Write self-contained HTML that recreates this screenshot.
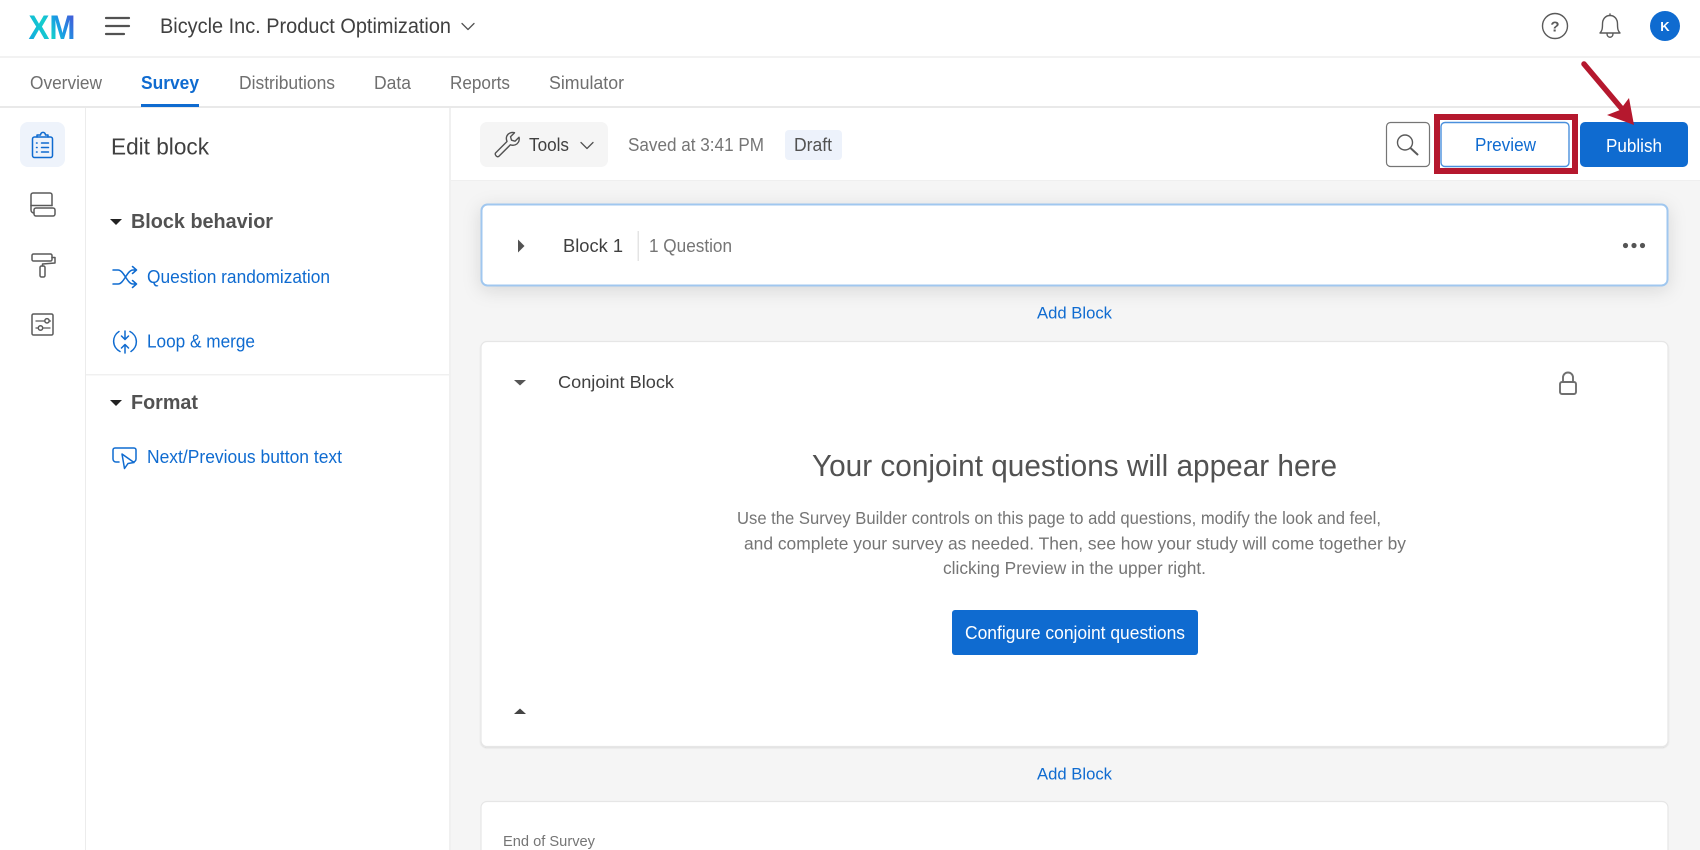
<!DOCTYPE html>
<html lang="en">
<head>
<meta charset="utf-8">
<title>Bicycle Inc. Product Optimization</title>
<style>
html,body{margin:0;padding:0;width:1700px;height:850px;overflow:hidden;background:#fff}
svg{display:block;font-family:"Liberation Sans",sans-serif;filter:blur(.35px)}
.ic{fill:none;stroke-linecap:round;stroke-linejoin:round}
</style>
</head>
<body>
<svg width="1700" height="850" viewBox="0 0 1700 850" xmlns="http://www.w3.org/2000/svg">
<defs>
<linearGradient id="xm" gradientUnits="userSpaceOnUse" x1="29" y1="39" x2="76" y2="14">
<stop offset="0" stop-color="#12a8e0"/><stop offset=".4" stop-color="#14d0cc"/><stop offset=".62" stop-color="#1a9be4"/><stop offset="1" stop-color="#4b4ed6"/>
</linearGradient>
<filter id="sh" x="-5%" y="-40%" width="110%" height="190%"><feDropShadow dx="0" dy="4" stdDeviation="9" flood-color="#000" flood-opacity=".12"/></filter>
<filter id="sh2" x="-5%" y="-5%" width="110%" height="110%"><feDropShadow dx="0" dy="1" stdDeviation=".8" flood-color="#000" flood-opacity=".12"/></filter>
</defs>

<!-- backgrounds -->
<rect width="1700" height="850" fill="#fff"/>
<rect x="451" y="181" width="1249" height="669" fill="#f5f5f5"/>
<rect x="0" y="56" width="1700" height="2" fill="#f2f2f2"/>
<rect x="0" y="106" width="1700" height="2" fill="#e9e9e9"/>
<rect x="85" y="108" width="1" height="742" fill="#ececec"/>
<rect x="449" y="108" width="2" height="742" fill="#f0f0f0"/>
<rect x="451" y="180" width="1249" height="1" fill="#efefef"/>

<!-- top bar -->
<text x="28.500" y="39" font-size="34" font-weight="700" fill="url(#xm)" textLength="47" lengthAdjust="spacingAndGlyphs">XM</text>
<g stroke="#525252" stroke-width="2.200" stroke-linecap="round"><path d="M106 18H129M106 26H129M106 34H124"/></g>
<text x="160" y="33" font-size="21" fill="#404040" textLength="291" lengthAdjust="spacingAndGlyphs">Bicycle Inc. Product Optimization</text>
<path class="ic" d="M462 23.500l6 6 6-6" stroke="#525252" stroke-width="1.300"/>
<circle class="ic" cx="1555" cy="26" r="12.500" stroke="#5a5a5a" stroke-width="1.400"/>
<text x="1555" y="31.500" font-size="15" font-weight="700" fill="#5a5a5a" text-anchor="middle">?</text>
<path class="ic" d="M1600 33c2-2 2.500-4 2.500-9 0-5 3-8.500 7.500-8.500s7.500 3.500 7.500 8.500c0 5 .5 7 2.500 9zM1610 15.500v-1.500M1607 33.500c0 5 6 5 6 0" stroke="#5a5a5a" stroke-width="1.400"/>
<circle cx="1665" cy="26" r="15" fill="#0f6bd0"/>
<text x="1665" y="31" font-size="13" font-weight="700" fill="#fff" text-anchor="middle">K</text>

<!-- tabs -->
<g font-size="18" fill="#6f6f6f">
<text x="30" y="89" textLength="72" lengthAdjust="spacingAndGlyphs">Overview</text>
<text x="239" y="89" textLength="96" lengthAdjust="spacingAndGlyphs">Distributions</text>
<text x="374" y="89" textLength="37" lengthAdjust="spacingAndGlyphs">Data</text>
<text x="450" y="89" textLength="60" lengthAdjust="spacingAndGlyphs">Reports</text>
<text x="549" y="89" textLength="75" lengthAdjust="spacingAndGlyphs">Simulator</text>
</g>
<text x="141" y="89" font-size="18" font-weight="700" fill="#0f6bd0" textLength="58" lengthAdjust="spacingAndGlyphs">Survey</text>
<rect x="141" y="104" width="58" height="3" fill="#0f6bd0"/>

<!-- left rail -->
<rect x="20" y="122" width="45" height="45" rx="8" fill="#eef3fb"/>
<g class="ic" stroke="#0f6bd0" stroke-width="1.500">
<rect x="32.500" y="137" width="20" height="20.500" rx="2"/>
<path d="M37 137v-2h3.500c.5-3.500 4.500-3.500 5 0H48v2"/>
<path d="M41.500 143h7M41.500 147.500h7M41.500 152h7"/>
<path d="M36.500 143h.6M36.500 147.500h.6M36.500 152h.6"/>
</g>
<g class="ic" stroke="#5a5a5a" stroke-width="1.500">
<path d="M52 205.500v-10.500a2 2 0 0 0-2-2H33a2 2 0 0 0-2 2v15a3 3 0 0 0 3 3"/>
<rect x="34" y="208" width="21" height="8" rx="2"/>
<path d="M31 205.500h21"/>
</g>
<g class="ic" stroke="#5a5a5a" stroke-width="1.500">
<rect x="32" y="254" width="20" height="7" rx="1.500"/>
<path d="M52 257.500h3v5.500L42.500 264v2"/>
<rect x="40" y="266" width="5" height="11" rx="1.500"/>
</g>
<g class="ic" stroke="#5a5a5a" stroke-width="1.500">
<rect x="32" y="314" width="21" height="21" rx="1.500"/>
<path d="M36 321h8M50 321h.5M36 328h1.500M43.500 328h6.500" stroke-width="1.300"/>
<circle cx="47" cy="320.800" r="2.200"/>
<circle cx="40.500" cy="328" r="2.200"/>
</g>

<!-- side panel -->
<text x="111" y="154.500" font-size="23" fill="#404040" textLength="98" lengthAdjust="spacingAndGlyphs">Edit block</text>
<path d="M110 219h12l-6 6z" fill="#222"/>
<text x="131" y="228" font-size="20.500" font-weight="700" fill="#525252" textLength="142" lengthAdjust="spacingAndGlyphs">Block behavior</text>

<g class="ic" stroke="#0f6bd0" stroke-width="1.500">
<path d="M113 270h5c6 0 9 14 15 14h3.500M113 284h5c6 0 9-14 15-14h3.500M132.500 266.500l4 3.500-4 3.500M132.500 280.500l4 3.500-4 3.500"/>
</g>
<text x="147" y="283" font-size="18" fill="#0f6bd0" textLength="183" lengthAdjust="spacingAndGlyphs">Question randomization</text>

<g class="ic" stroke="#0f6bd0" stroke-width="1.500">
<path d="M130 331.500a11.500 11.500 0 0 1 1 20M120 351.500a11.500 11.500 0 0 1-1-20"/>
<path d="M125 331v8.500M121.500 336l3.500 3.500 3.500-3.500M125 353v-8.500M121.500 348l3.500-3.500 3.500 3.500"/>
</g>
<text x="147" y="347.500" font-size="18" fill="#0f6bd0" textLength="108" lengthAdjust="spacingAndGlyphs">Loop &amp; merge</text>

<rect x="86" y="374" width="363" height="1.500" fill="#f0f0f0"/>
<path d="M110 400h12l-6 6z" fill="#222"/>
<text x="131" y="409" font-size="20.500" font-weight="700" fill="#525252" textLength="67" lengthAdjust="spacingAndGlyphs">Format</text>

<g class="ic" stroke="#0f6bd0" stroke-width="1.500">
<path d="M119 462h-3a3 3 0 0 1-3-3v-9a2 2 0 0 1 2-2h19a2 2 0 0 1 2 2v9a3 3 0 0 1-3 3h-1"/>
<path d="M122 454l2.500 14.500 3.500-5 6-1z" fill="#fff"/>
</g>
<text x="147" y="463" font-size="18" fill="#0f6bd0" textLength="195" lengthAdjust="spacingAndGlyphs">Next/Previous button text</text>

<!-- toolbar -->
<rect x="480" y="122" width="128" height="45" rx="7" fill="#f5f5f5"/>
<path class="ic" stroke="#525252" stroke-width="1.400" d="M495.500 153l11.500-11.500c-1.800-4.500.5-7.500 3-8.500 1.500-.6 3-.8 4.500-.3l-4 4 1 3.500 3.500 1 4-4c.5 2 .2 3.500-.6 5-1.500 2.500-4.500 3.800-8 2.600l-11.500 11.500c-1.500 1.500-4.500-1.300-3.400-3.300z"/>
<text x="529" y="151" font-size="18" fill="#404040" textLength="40" lengthAdjust="spacingAndGlyphs">Tools</text>
<path class="ic" d="M581 142.500l6 6 6-6" stroke="#525252" stroke-width="1.300"/>
<text x="628" y="151" font-size="18" fill="#757575" textLength="136" lengthAdjust="spacingAndGlyphs">Saved at 3:41 PM</text>
<rect x="785" y="130" width="57" height="30" rx="4" fill="#edf2fb"/>
<text x="794" y="151" font-size="18" fill="#525252" textLength="38" lengthAdjust="spacingAndGlyphs">Draft</text>

<rect x="1386.500" y="122.500" width="43" height="44" rx="4" fill="#fff" stroke="#757575" stroke-width="1.200"/>
<g class="ic" stroke="#5a5a5a" stroke-width="1.400"><circle cx="1405" cy="142.500" r="7.500"/><path d="M1411 148.500l6.500 6" stroke-width="2"/></g>

<rect x="1437" y="117" width="138" height="54" fill="none" stroke="#b5182e" stroke-width="6"/>
<rect x="1441" y="122.500" width="128" height="44" rx="4" fill="#fff" stroke="#4a90dd" stroke-width="1.400"/>
<text x="1475" y="151" font-size="18" fill="#0f6bd0" textLength="61" lengthAdjust="spacingAndGlyphs">Preview</text>
<rect x="1580" y="122" width="108" height="45" rx="5" fill="#0f6bd0"/>
<text x="1606" y="152" font-size="18" fill="#fff" textLength="56" lengthAdjust="spacingAndGlyphs">Publish</text>

<!-- arrow -->
<path d="M1584 64L1622 109" stroke="#b5182e" stroke-width="5.500" stroke-linecap="round"/>
<path d="M1634 125L1607 115L1620 110L1629 98z" fill="#b5182e"/>

<!-- block 1 -->
<rect x="481.500" y="204.500" width="1186" height="81" rx="6" fill="#fff" stroke="#a0c7ef" stroke-width="2" filter="url(#sh)"/>
<path d="M518 239.500l6.500 6.500-6.500 6.500z" fill="#525252"/>
<text x="563" y="252" font-size="18" fill="#404040" textLength="60" lengthAdjust="spacingAndGlyphs">Block 1</text>
<rect x="637.500" y="231" width="1.500" height="30" fill="#e4e4e4"/>
<text x="649" y="252" font-size="18" fill="#757575" textLength="83" lengthAdjust="spacingAndGlyphs">1 Question</text>
<g fill="#555"><circle cx="1625.500" cy="245.500" r="2.600"/><circle cx="1634" cy="245.500" r="2.600"/><circle cx="1642.500" cy="245.500" r="2.600"/></g>

<text x="1037" y="318.500" font-size="16.500" fill="#0f6bd0" textLength="75" lengthAdjust="spacingAndGlyphs">Add Block</text>

<!-- conjoint block -->
<rect x="481" y="341.500" width="1187" height="405" rx="6" fill="#fff" stroke="#e6e6e6" stroke-width="1.200" filter="url(#sh2)"/>
<path d="M514 380h12l-6 5.500z" fill="#555"/>
<text x="558" y="388" font-size="17.500" fill="#404040" textLength="116" lengthAdjust="spacingAndGlyphs">Conjoint Block</text>
<g class="ic" stroke="#6f6f6f" stroke-width="1.900"><rect x="1560" y="382" width="16" height="12" rx="2"/><path d="M1563 382v-4.500a5 5 0 0 1 10 0v4.500"/></g>

<text x="812" y="476" font-size="31" fill="#525252" textLength="525" lengthAdjust="spacingAndGlyphs">Your conjoint questions will appear here</text>
<g font-size="17.500" fill="#757575">
<text x="737" y="524" textLength="644" lengthAdjust="spacingAndGlyphs">Use the Survey Builder controls on this page to add questions, modify the look and feel,</text>
<text x="744" y="549.500" textLength="662" lengthAdjust="spacingAndGlyphs">and complete your survey as needed. Then, see how your study will come together by</text>
<text x="943" y="574" textLength="263" lengthAdjust="spacingAndGlyphs">clicking Preview in the upper right.</text>
</g>
<rect x="952" y="610" width="246" height="45" rx="3" fill="#0f6bd0"/>
<text x="965" y="639" font-size="18" fill="#fff" textLength="220" lengthAdjust="spacingAndGlyphs">Configure conjoint questions</text>
<path d="M514 714h12l-6-5.500z" fill="#444"/>

<text x="1037" y="779.500" font-size="16.500" fill="#0f6bd0" textLength="75" lengthAdjust="spacingAndGlyphs">Add Block</text>

<!-- end of survey -->
<rect x="481" y="801.500" width="1187" height="80" rx="6" fill="#fff" stroke="#e6e6e6" stroke-width="1.200"/>
<text x="503" y="846" font-size="15" fill="#757575" textLength="92" lengthAdjust="spacingAndGlyphs">End of Survey</text>
</svg>
</body>
</html>
